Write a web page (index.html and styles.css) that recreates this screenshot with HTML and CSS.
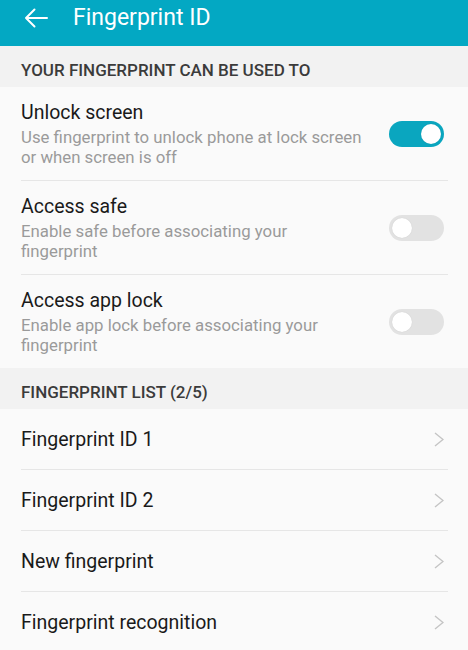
FILE: index.html
```html
<!DOCTYPE html>
<html lang="en">
<head>
  <meta charset="UTF-8" />
  <meta name="viewport" content="width=device-width, initial-scale=1.0"/>
  <title>Fingerprint ID</title>
  <link rel="stylesheet" href="styles.css">
</head>
<body>
  <header class="barra">
    <svg class="volver" width="24" height="20" viewBox="0 0 24 20" fill="none" stroke="#fff" stroke-width="2" stroke-linecap="round" stroke-linejoin="round">
      <path d="M23 10H2M10.5 1.5L2 10l8.5 8.5"/>
    </svg>
    <h1>Fingerprint ID</h1>
  </header>

  <div class="seccion">Your fingerprint can be used to</div>
  <div class="bloque">
    <div class="fila-opcion">
      <div class="texto">
        <div class="titulo">Unlock screen</div>
        <div class="detalle">Use fingerprint to unlock phone at lock screen or when screen is off</div>
      </div>
      <span class="interruptor activo"></span>
    </div>
    <div class="fila-opcion">
      <div class="texto">
        <div class="titulo">Access safe</div>
        <div class="detalle">Enable safe before associating your fingerprint</div>
      </div>
      <span class="interruptor"></span>
    </div>
    <div class="fila-opcion">
      <div class="texto">
        <div class="titulo">Access app lock</div>
        <div class="detalle">Enable app lock before associating your fingerprint</div>
      </div>
      <span class="interruptor"></span>
    </div>
  </div>

  <div class="seccion">Fingerprint list (2/5)</div>
  <div class="bloque">
    <div class="fila-lista"><span>Fingerprint ID 1</span><svg class="flecha" width="10" height="15" viewBox="0 0 10 15"><path d="M1 1l8 6.5L1 14" fill="none" stroke="#c4c4c4" stroke-width="1.4"/></svg></div>
    <div class="fila-lista"><span>Fingerprint ID 2</span><svg class="flecha" width="10" height="15" viewBox="0 0 10 15"><path d="M1 1l8 6.5L1 14" fill="none" stroke="#c4c4c4" stroke-width="1.4"/></svg></div>
    <div class="fila-lista"><span>New fingerprint</span><svg class="flecha" width="10" height="15" viewBox="0 0 10 15"><path d="M1 1l8 6.5L1 14" fill="none" stroke="#c4c4c4" stroke-width="1.4"/></svg></div>
    <div class="fila-lista"><span>Fingerprint recognition</span><svg class="flecha" width="10" height="15" viewBox="0 0 10 15"><path d="M1 1l8 6.5L1 14" fill="none" stroke="#c4c4c4" stroke-width="1.4"/></svg></div>
  </div>
</body>
</html>
```

FILE: styles.css
```css
body {
  margin: 0;
  padding: 0;
  font-family: Roboto, 'Noto Sans', sans-serif;
  background: #fafafa;
  color: #1a1a1a;
}

.barra {
  display: flex;
  align-items: center;
  height: 46px;
  margin-top: -12px;
  padding: 12px 0 0 24px;
  background: #03a8c3;
  box-sizing: content-box;
}

.volver {
  display: block;
  margin-top: -10px;
}

.barra h1 {
  margin: -11px 0 0 25px;
  font-size: 23px;
  font-weight: 400;
  color: #ffffff;
  line-height: 28px;
}

.seccion {
  background: #f2f2f2;
  padding: 14px 21px 7px;
  font-size: 17px;
  line-height: 20px;
  font-weight: 500;
  text-transform: uppercase;
  color: #3b3b3b;
}

.bloque {
  background: #fafafa;
  margin: 0 20px 0 21px;
}

.fila-opcion {
  display: flex;
  align-items: center;
  gap: 22px;
  padding: 14px 0 13px;
  border-bottom: 1px solid #e6e6e6;
}

.fila-opcion:last-child {
  border-bottom: none;
}

.texto {
  flex: 1;
}

.titulo {
  font-size: 19.5px;
  line-height: 24px;
}

.detalle {
  margin-top: 2px;
  font-size: 16.8px;
  line-height: 20px;
  color: #9a9a9a;
}

.interruptor {
  position: relative;
  flex: none;
  width: 55px;
  height: 26px;
  margin-right: 4px;
  border-radius: 13px;
  background: #e2e2e2;
}

/* la bolita del interruptor */
.interruptor::after {
  content: "";
  position: absolute;
  top: 3px;
  left: 3px;
  width: 20px;
  height: 20px;
  border-radius: 50%;
  background: #ffffff;
  box-shadow: 0 0 1px rgba(0, 0, 0, 0.15);
}

.interruptor.activo {
  background: #0aa6bf;
}

.interruptor.activo::after {
  left: 32px;
}

.fila-lista {
  display: flex;
  align-items: center;
  justify-content: space-between;
  height: 60px;
  font-size: 19.5px;
  border-bottom: 1px solid #e6e6e6;
}

.fila-lista:last-child {
  border-bottom: none;
}

.flecha {
  display: block;
  margin-right: 4px;
}
```
